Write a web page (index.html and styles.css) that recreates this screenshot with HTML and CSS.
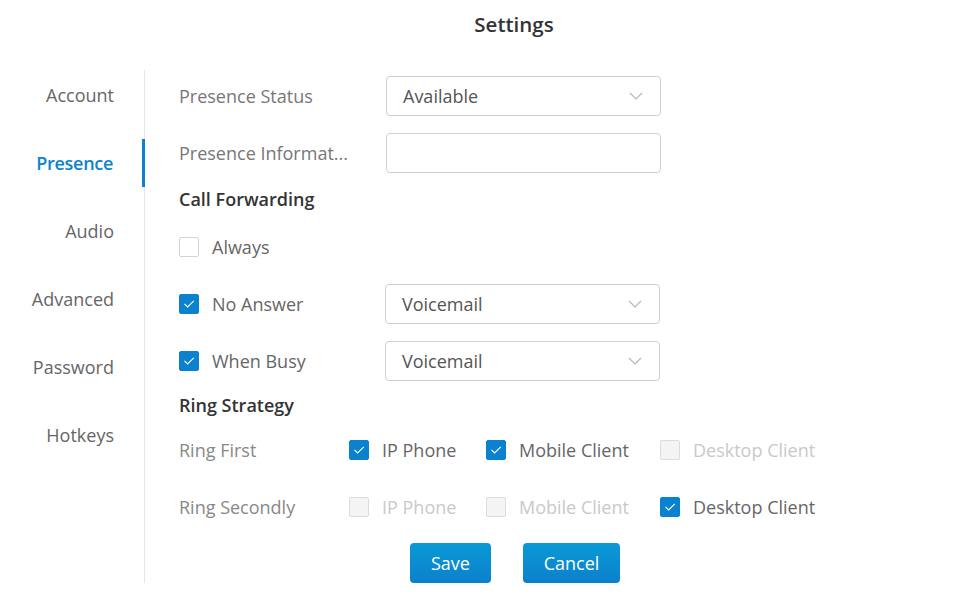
FILE: index.html
```html
<!DOCTYPE html>
<html>
<head>
<meta charset="utf-8">
<link rel="stylesheet" href="styles.css">
</head>
<body>
<div class="title">Settings</div>
<div class="main">
  <nav class="sidebar">
    <div class="nav-item">Account</div>
    <div class="nav-item active">Presence</div>
    <div class="nav-item">Audio</div>
    <div class="nav-item">Advanced</div>
    <div class="nav-item">Password</div>
    <div class="nav-item">Hotkeys</div>
  </nav>
  <div class="content">
    <div class="row first">
      <div class="label">Presence Status</div>
      <div class="select"><span>Available</span><svg class="chev" width="14" height="8" viewBox="0 0 14 8"><path d="M1 1 L7 7 L13 1" fill="none" stroke="#b5b5b5" stroke-width="1.1"/></svg></div>
    </div>
    <div class="row">
      <div class="label">Presence Informat...</div>
      <div class="select"></div>
    </div>
    <div class="heading h1">Call Forwarding</div>
    <div class="row">
      <div class="check-label"><span class="cb"></span><span>Always</span></div>
    </div>
    <div class="row">
      <div class="check-label"><span class="cb on"><svg width="12" height="10" viewBox="0 0 12 10"><path d="M1.5 4.8 L4.6 8 L10.8 1.8" fill="none" stroke="#fff" stroke-width="1.1"/></svg></span><span>No Answer</span></div>
      <div class="select"><span>Voicemail</span><svg class="chev" width="14" height="8" viewBox="0 0 14 8"><path d="M1 1 L7 7 L13 1" fill="none" stroke="#b5b5b5" stroke-width="1.1"/></svg></div>
    </div>
    <div class="row">
      <div class="check-label"><span class="cb on"><svg width="12" height="10" viewBox="0 0 12 10"><path d="M1.5 4.8 L4.6 8 L10.8 1.8" fill="none" stroke="#fff" stroke-width="1.1"/></svg></span><span>When Busy</span></div>
      <div class="select"><span>Voicemail</span><svg class="chev" width="14" height="8" viewBox="0 0 14 8"><path d="M1 1 L7 7 L13 1" fill="none" stroke="#b5b5b5" stroke-width="1.1"/></svg></div>
    </div>
    <div class="heading h2">Ring Strategy</div>
    <div class="ring-row">
      <div class="ring-label">Ring First</div>
      <div class="opt w1"><span class="cb on"><svg width="12" height="10" viewBox="0 0 12 10"><path d="M1.5 4.8 L4.6 8 L10.8 1.8" fill="none" stroke="#fff" stroke-width="1.1"/></svg></span><span>IP Phone</span></div>
      <div class="opt w2"><span class="cb on"><svg width="12" height="10" viewBox="0 0 12 10"><path d="M1.5 4.8 L4.6 8 L10.8 1.8" fill="none" stroke="#fff" stroke-width="1.1"/></svg></span><span>Mobile Client</span></div>
      <div class="opt disabled"><span class="cb"></span><span>Desktop Client</span></div>
    </div>
    <div class="ring-row second">
      <div class="ring-label">Ring Secondly</div>
      <div class="opt w1 disabled"><span class="cb"></span><span>IP Phone</span></div>
      <div class="opt w2 disabled"><span class="cb"></span><span>Mobile Client</span></div>
      <div class="opt"><span class="cb on"><svg width="12" height="10" viewBox="0 0 12 10"><path d="M1.5 4.8 L4.6 8 L10.8 1.8" fill="none" stroke="#fff" stroke-width="1.1"/></svg></span><span>Desktop Client</span></div>
    </div>
    <div class="buttons">
      <button class="btn save">Save</button>
      <button class="btn cancel">Cancel</button>
    </div>
  </div>
</div>
</body>
</html>
```

FILE: styles.css
```css
html, body {
  margin: 0;
  padding: 0;
  background: #fff;
}
body {
  width: 978px;
  height: 605px;
  overflow: hidden;
  font-family: "Open Sans", "Noto Sans", sans-serif;
  font-size: 18px;
  color: #666;
}
.title {
  height: 48px;
  line-height: 48px;
  text-align: center;
  font-size: 20.5px;
  font-weight: 600;
  color: #333;
  padding-left: 50px;
}
.main {
  display: flex;
  margin-top: 22px;
}
.sidebar {
  width: 145px;
  height: 513px;
  border-right: 1px solid #e6e6e6;
  padding-top: 1px;
  box-sizing: border-box;
  display: flex;
  flex-direction: column;
  gap: 20px;
}
.nav-item {
  height: 48px;
  line-height: 48px;
  text-align: right;
  padding-right: 31px;
  margin-right: -1px;
  color: #666;
}
.nav-item.active {
  color: #0a84cf;
  font-weight: 600;
  letter-spacing: -0.3px;
  border-right: 3px solid #0a84cf;
  padding-right: 29px;
}
.content {
  flex: 1;
  padding-left: 33px;
  padding-top: 6px;
  display: flex;
  flex-direction: column;
}
.row {
  height: 40px;
  display: flex;
  align-items: center;
  margin-top: 17px;
}
.row.first {
  margin-top: 0;
}
.label {
  width: 207px;
  color: #777;
  padding-left: 1px;
}
.select {
  width: 275px;
  height: 40px;
  box-sizing: border-box;
  border: 1px solid #cfcfcf;
  border-radius: 4px;
  display: flex;
  align-items: center;
  justify-content: space-between;
  padding: 0 17px 0 16px;
  color: #555;
}
.check-label {
  width: 207px;
  display: flex;
  align-items: center;
  color: #666;
}
.cb {
  width: 20px;
  height: 20px;
  box-sizing: border-box;
  border: 1px solid #d4d4d4;
  border-radius: 2px;
  background: #fff;
  margin-left: 1px;
  margin-right: 13px;
  display: inline-flex;
  align-items: center;
  justify-content: center;
  flex: none;
}
.cb.on {
  background: #0a82cf;
  border-color: #0a82cf;
}
.heading {
  color: #333;
  font-weight: 600;
  display: flex;
  align-items: center;
  padding-left: 1px;
}
.heading.h1 {
  height: 54px;
  padding-bottom: 3px;
  box-sizing: border-box;
}
.heading.h2 {
  height: 49px;
  padding-bottom: 1px;
  box-sizing: border-box;
}
.heading + .row {
  margin-top: 0;
}
.ring-row {
  height: 40px;
  display: flex;
  align-items: center;
}
.ring-row.second {
  margin-top: 17px;
}
.ring-label {
  width: 169px;
  padding-left: 1px;
  color: #888;
}
.opt {
  display: flex;
  align-items: center;
  color: #666;
}
.opt .cb {
  margin-right: 13px;
}
.opt.w1 {
  width: 137px;
}
.opt.w2 {
  width: 174px;
}
.opt.disabled {
  color: #c9c9c9;
}
.opt.disabled .cb {
  background: #f4f4f4;
  border-color: #dcdcdc;
}
.buttons {
  display: flex;
  gap: 32px;
  margin-top: 16px;
  padding-left: 232px;
}
.btn {
  height: 40px;
  border: none;
  border-radius: 4px;
  background: linear-gradient(#0a9ad5, #0b80cc);
  color: #fff;
  font-family: "Open Sans", "Noto Sans", sans-serif;
  font-size: 18px;
  padding: 0;
  cursor: pointer;
}
.btn.save {
  width: 81px;
}
.btn.cancel {
  width: 97px;
}
```
